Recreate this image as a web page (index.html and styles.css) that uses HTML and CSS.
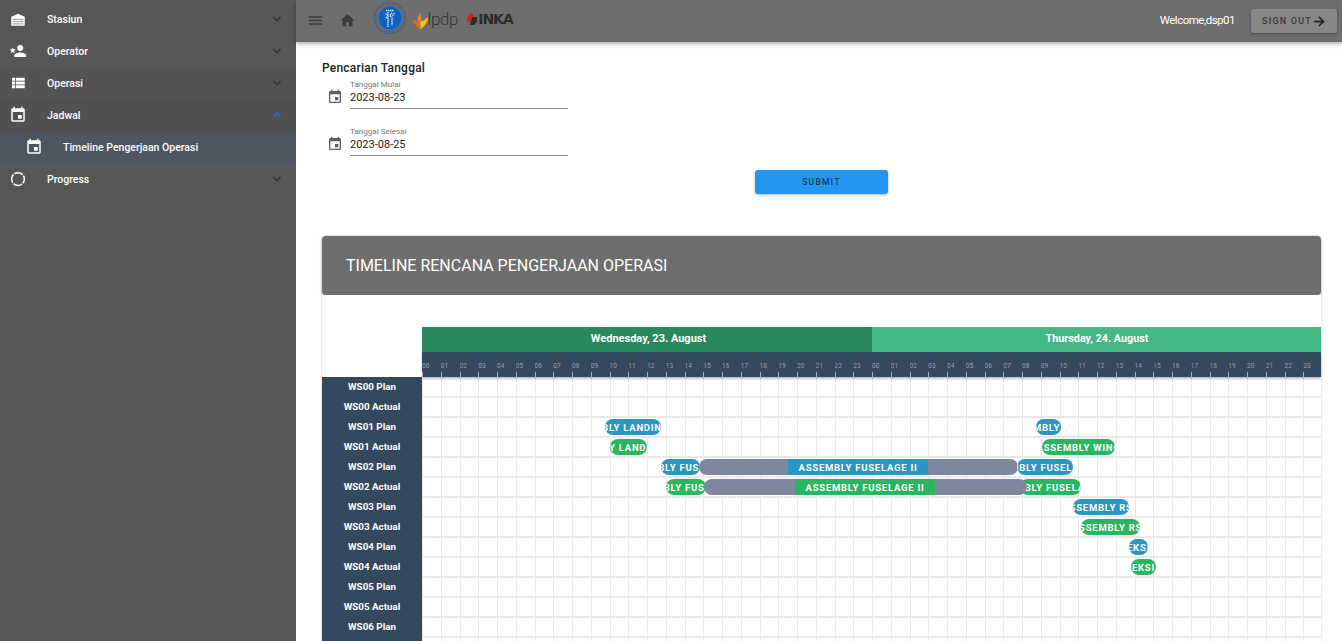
FILE: index.html
```html
<!DOCTYPE html>
<html lang="id">
<head>
<meta charset="utf-8">
<title>Timeline Pengerjaan Operasi</title>
<link rel="stylesheet" href="styles.css">
</head>
<body>
<div class="app">
  <aside class="sidebar">
    <div class="nav-row">
      <svg class="nav-icon" viewBox="0 0 24 24"><path d="M12 5 3 9v12h18V9z"/><path class="cut" d="M5 12.500h14M5 15.500h14M5 18.500h14"/></svg>
      <span class="nav-label">Stasiun</span>
      <svg class="chev" viewBox="0 0 24 24"><path d="M7.410 8.580 12 13.170l4.590-4.590L18 10l-6 6-6-6z"/></svg>
    </div>
    <div class="nav-row">
      <svg class="nav-icon" viewBox="0 0 24 24"><path d="M15 14c-2.670 0-8 1.330-8 4v2h16v-2c0-2.670-5.330-4-8-4m0-2a4 4 0 0 0 4-4 4 4 0 0 0-4-4 4 4 0 0 0-4 4 4 4 0 0 0 4 4M5 13.280l2.450 1.490-.65-2.810L9 10.080l-2.890-.25L5 7.190 3.870 9.830 1 10.080l2.180 1.880-.68 2.810z"/></svg>
      <span class="nav-label">Operator</span>
      <svg class="chev" viewBox="0 0 24 24"><path d="M7.410 8.580 12 13.170l4.590-4.590L18 10l-6 6-6-6z"/></svg>
    </div>
    <div class="nav-row nav-row-dim">
      <svg class="nav-icon" viewBox="0 0 24 24"><path d="M9 5v4h12V5M9 19h12v-4H9m0-1h12v-4H9M4 9h4V5H4m0 14h4v-4H4m0-1h4v-4H4z"/></svg>
      <span class="nav-label">Operasi</span>
      <svg class="chev" viewBox="0 0 24 24"><path d="M7.410 8.580 12 13.170l4.590-4.590L18 10l-6 6-6-6z"/></svg>
    </div>
    <div class="nav-row nav-row-open">
      <svg class="nav-icon" viewBox="0 0 24 24"><path d="M17 12h-5v5h5v-5zM16 1v2H8V1H6v2H5c-1.110 0-1.990.9-1.990 2L3 19c0 1.100.89 2 2 2h14c1.100 0 2-.9 2-2V5c0-1.100-.9-2-2-2h-1V1h-2zm3 18H5V8h14v11z"/></svg>
      <span class="nav-label">Jadwal</span>
      <svg class="chev chev-up" viewBox="0 0 24 24"><path d="M7.410 15.410 12 10.830l4.590 4.580L18 14l-6-6-6 6z"/></svg>
    </div>
    <div class="nav-row nav-sub">
      <svg class="nav-icon" viewBox="0 0 24 24"><path d="M17 12h-5v5h5v-5zM16 1v2H8V1H6v2H5c-1.110 0-1.990.9-1.990 2L3 19c0 1.100.89 2 2 2h14c1.100 0 2-.9 2-2V5c0-1.100-.9-2-2-2h-1V1h-2zm3 18H5V8h14v11z"/></svg>
      <span class="nav-label">Timeline Pengerjaan Operasi</span>
    </div>
    <div class="nav-row">
      <svg class="nav-icon" viewBox="0 0 24 24"><circle class="ring" cx="12" cy="12" r="8.500"/></svg>
      <span class="nav-label">Progress</span>
      <svg class="chev" viewBox="0 0 24 24"><path d="M7.410 8.580 12 13.170l4.590-4.590L18 10l-6 6-6-6z"/></svg>
    </div>
  </aside>

  <div class="main">
    <header class="topbar">
      <svg class="top-icon" viewBox="0 0 24 24"><path d="M3 18h18v-2H3v2zm0-5h18v-2H3v2zm0-7v2h18V6H3z"/></svg>
      <svg class="top-icon" viewBox="0 0 24 24"><path d="M10 20v-6h4v6h5v-8h3L12 3 2 12h3v8z"/></svg>
      <div class="logos">
        <svg class="logo-seal" viewBox="0 0 34 34"><circle class="seal-ring" cx="17" cy="17" r="15.500"/><circle class="seal-ring2" cx="17" cy="17" r="13.500"/><circle class="seal-core" cx="17" cy="17" r="11.500"/><path class="seal-mark" d="M13 9.500h8M15 11v15M19 11.500l-2 3 2 2v8M12.500 12.500l3 3M21.500 12l-2 3M13 16l2 2"/></svg>
        <svg class="logo-flame" viewBox="0 0 16 18"><path class="flame-a" d="M0 7l4 2 3.500 4v5C4 15.500 1 12 0 7z"/><path class="flame-b" d="M4.500 8c1-2.500 1.500-5 2.500-8 1 2.500 2.500 4 2 7l-2 4.500z"/><path class="flame-c" d="M16 5c0 5-3.500 9.500-8 13v-5c2-3.500 4.500-6 8-8zM7 12l3-4 1.500 1.500-3 4z"/></svg>
        <span class="logo-lpdp">lpdp</span>
        <svg class="logo-inka-mark" viewBox="0 0 12 14"><path class="mark-dark" d="M6 5h5v5l-3 3H4z"/><path d="M1 6.500C1 4 4 3 6 0.500c0 1.500.5 2 2 2.500L5 7l-1 4C2 10.500 1 8.500 1 6.500z"/></svg>
        <span class="logo-inka">INKA</span>
      </div>
      <span class="welcome">Welcome,dsp01</span>
      <button class="signout" type="button">SIGN OUT<svg viewBox="0 0 24 24"><path d="M4 11v2h12l-5.500 5.500 1.420 1.420L19.840 12l-7.920-7.920L10.500 5.500 16 11z"/></svg></button>
    </header>

    <main class="content">
      <section class="search">
        <h2 class="search-title">Pencarian Tanggal</h2>
        <div class="field">
          <svg class="field-icon" viewBox="0 0 24 24"><path d="M17 12h-5v5h5v-5zM16 1v2H8V1H6v2H5c-1.110 0-1.990.9-1.990 2L3 19c0 1.100.89 2 2 2h14c1.100 0 2-.9 2-2V5c0-1.100-.9-2-2-2h-1V1h-2zm3 18H5V8h14v11z"/></svg>
          <div class="field-box">
            <span class="field-label">Tanggal Mulai</span>
            <span class="field-value">2023-08-23</span>
          </div>
        </div>
        <div class="field">
          <svg class="field-icon" viewBox="0 0 24 24"><path d="M17 12h-5v5h5v-5zM16 1v2H8V1H6v2H5c-1.110 0-1.990.9-1.990 2L3 19c0 1.100.89 2 2 2h14c1.100 0 2-.9 2-2V5c0-1.100-.9-2-2-2h-1V1h-2zm3 18H5V8h14v11z"/></svg>
          <div class="field-box">
            <span class="field-label">Tanggal Selesai</span>
            <span class="field-value">2023-08-25</span>
          </div>
        </div>
        <div class="submit-wrap"><button class="submit" type="button">SUBMIT</button></div>
      </section>

      <section class="card">
        <div class="card-head">TIMELINE RENCANA PENGERJAAN OPERASI</div>
        <div class="gantt">
          <div class="gantt-corner"></div>
          <div class="gantt-top">
            <div class="days">
              <div class="day day-a">Wednesday, 23. August</div>
              <div class="day day-b">Thursday, 24. August</div>
            </div>
            <div class="hours">
              <span>00</span><span>01</span><span>02</span><span>03</span><span>04</span><span>05</span><span>06</span><span>07</span><span>08</span><span>09</span><span>10</span><span>11</span><span>12</span><span>13</span><span>14</span><span>15</span><span>16</span><span>17</span><span>18</span><span>19</span><span>20</span><span>21</span><span>22</span><span>23</span>
              <span>00</span><span>01</span><span>02</span><span>03</span><span>04</span><span>05</span><span>06</span><span>07</span><span>08</span><span>09</span><span>10</span><span>11</span><span>12</span><span>13</span><span>14</span><span>15</span><span>16</span><span>17</span><span>18</span><span>19</span><span>20</span><span>21</span><span>22</span><span>23</span>
            </div>
          </div>
          <div class="labels">
            <div>WS00 Plan</div><div>WS00 Actual</div><div>WS01 Plan</div><div>WS01 Actual</div><div>WS02 Plan</div><div>WS02 Actual</div><div>WS03 Plan</div><div>WS03 Actual</div><div>WS04 Plan</div><div>WS04 Actual</div><div>WS05 Plan</div><div>WS05 Actual</div><div>WS06 Plan</div>
          </div>
          <div class="plot">
            <div class="cols"><i></i><i></i><i></i><i></i><i></i><i></i><i></i><i></i><i></i><i></i><i></i><i></i><i></i><i></i><i></i><i></i><i></i><i></i><i></i><i></i><i></i><i></i><i></i><i></i><i></i><i></i><i></i><i></i><i></i><i></i><i></i><i></i><i></i><i></i><i></i><i></i><i></i><i></i><i></i><i></i><i></i><i></i><i></i><i></i><i></i><i></i><i></i><i></i></div>
            <div class="line"></div>
            <div class="line"></div>
            <div class="line">
              <div class="bar plan" style="left:183px;width:56px"><span>ASSEMBLY LANDING GEAR</span></div>
              <div class="bar plan" style="left:614px;width:25px"><span>ASSEMBLY WING</span></div>
            </div>
            <div class="line">
              <div class="bar actual" style="left:188px;width:37px"><span>ASSEMBLY LANDING GEAR</span></div>
              <div class="bar actual" style="left:620px;width:73px"><span>ASSEMBLY WING</span></div>
            </div>
            <div class="line">
              <div class="bar plan" style="left:239px;width:39px"><span>ASSEMBLY FUSELAGE I</span></div>
              <div class="bar rest" style="left:277px;width:319px"></div>
              <div class="bar plan bar-mid" style="left:366px;width:140px"><span>ASSEMBLY FUSELAGE II</span></div>
              <div class="bar plan" style="left:595px;width:56px"><span>ASSEMBLY FUSELAGE III</span></div>
            </div>
            <div class="line">
              <div class="bar actual" style="left:244px;width:40px"><span>ASSEMBLY FUSELAGE I</span></div>
              <div class="bar actual" style="left:598px;width:61px"><span>ASSEMBLY FUSELAGE III</span></div>
              <div class="bar rest" style="left:282px;width:323px"></div>
              <div class="bar actual bar-mid" style="left:373px;width:140px"><span>ASSEMBLY FUSELAGE II</span></div>
            </div>
            <div class="line">
              <div class="bar plan" style="left:651px;width:56px"><span>ASSEMBLY RSC</span></div>
            </div>
            <div class="line">
              <div class="bar actual" style="left:659px;width:59px"><span>ASSEMBLY RSC</span></div>
            </div>
            <div class="line">
              <div class="bar plan" style="left:707px;width:19px"><span>EKSI</span></div>
            </div>
            <div class="line">
              <div class="bar actual" style="left:709px;width:25px"><span>EKSI</span></div>
            </div>
            <div class="line"></div>
            <div class="line"></div>
            <div class="line"></div>
            <div class="line"></div>
          </div>
        </div>
      </section>
    </main>
  </div>
</div>
</body>
</html>
```

FILE: styles.css
```css
* { box-sizing: border-box; }
html, body { margin: 0; height: 100%; overflow: hidden; }
body { font-family: Roboto, "Liberation Sans", sans-serif; background: #fff; color: #222; }
.app { display: flex; height: 641px; overflow: hidden; }

.sidebar { flex: 0 0 296px; background: #565656; padding-top: 3px; }
.nav-row { display: flex; align-items: center; height: 32px; padding: 0 11px 0 9px; color: #fff; }
.nav-row-dim { background: #535353; }
.nav-row-open { background: #515151; }
.nav-sub { background: #4c5560; padding-left: 25px; }
.nav-icon { width: 18px; height: 18px; fill: #fff; flex: none; }
.nav-icon .cut { fill: none; stroke: #777; stroke-width: 1; }
.nav-icon .ring { fill: none; stroke: #fff; stroke-width: 2; stroke-dasharray: 12 1.350; stroke-dashoffset: 6; }
.nav-label { margin-left: 20px; font-size: 10.500px; font-weight: 500; flex: 1; }
.chev { width: 16px; height: 16px; fill: #333; flex: none; }
.chev-up { fill: #2468cc; }

.main { flex: 1; min-width: 0; display: flex; flex-direction: column; }
.topbar { flex: 0 0 42px; height: 42px; display: flex; align-items: center; background: #6e6e6e; padding: 0 5px 0 11px; gap: 15px; box-shadow: 0 2px 4px rgba(0,0,0,.3); position: relative; z-index: 2; }
.top-icon { width: 17px; height: 17px; fill: #3a3a3a; flex: none; margin-bottom: 2px; }
.logos { display: flex; align-items: flex-start; margin-left: 2px; flex: 1; height: 38px; padding-top: 1px; align-self: flex-start; }
.logo-seal { width: 34px; height: 34px; }
.seal-ring { fill: none; stroke: #1d5fa8; stroke-width: 1.200; stroke-dasharray: 1.500 1; }
.seal-ring2 { fill: none; stroke: #1d5fa8; stroke-width: .8; stroke-dasharray: 1 1; }
.seal-core { fill: #0a62c2; }
.seal-mark { fill: none; stroke: #e6ebf5; stroke-width: 1.300; stroke-dasharray: 1.400 .6; }
.logo-flame { width: 15px; height: 18px; margin: 11px 0 0 6px; }
.flame-a { fill: #d9701c; }
.flame-b { fill: #e8851e; }
.flame-c { fill: #f5bf1c; }
.logo-lpdp { font-family: Lato, sans-serif; font-weight: 300; font-size: 17px; color: #262626; line-height: 20px; letter-spacing: -.3px; margin: 8px 0 0 -.5px; }
.logo-inka-mark { width: 12px; height: 14px; fill: #e8141c; margin: 11px 0 0 8px; }
.mark-dark { fill: #2b2b2b; }
.logo-inka { font-family: "DejaVu Sans", sans-serif; font-weight: 700; font-size: 14px; color: #2b2b2b; letter-spacing: -1px; line-height: 16px; margin: 10px 0 0 0; }
.welcome { color: #fff; font-size: 11.500px; letter-spacing: -.5px; margin: 0 1px 3px 0; }
.signout { display: flex; align-items: center; justify-content: flex-start; gap: 0; width: 86px; height: 24px; border: 0; border-radius: 3px; padding: 0 0 0 11px; background: #878787; color: #3a3a3a; font: 500 9px Roboto, sans-serif; letter-spacing: 1.200px; box-shadow: 0 1px 3px rgba(0,0,0,.3); }
.signout svg { width: 15px; height: 15px; fill: #222; stroke: #222; stroke-width: .8; }

.content { flex: 1; min-height: 0; overflow: hidden; padding: 0 21px 0 26px; }
.search { height: 194px; padding-top: 18px; }
.search-title { margin: 0; font-size: 12px; font-weight: 500; line-height: 16px; color: #222; letter-spacing: .22px; }
.field { display: flex; align-items: flex-end; height: 33px; width: 246px; padding-left: 5px; margin-bottom: 14px; }
.field-icon { width: 16px; height: 16px; fill: #5e5e5e; flex: none; margin: 0 7px 4px 0; }
.field-box { flex: 1; display: flex; flex-direction: column; padding: 4px 0 0; }
.field-label { font-size: 8.100px; line-height: 9px; color: #777; margin-bottom: 1px; }
.field-value { font-size: 11px; line-height: 14px; color: #222; border-bottom: 1px solid #8d8d8d; height: 19px; padding-top: 1px; }
.submit-wrap { display: flex; justify-content: center; width: 999px; }
.submit { width: 133px; height: 24px; border: 0; border-radius: 3px; background: #2196f3; color: #1c1c1c; font: 400 8.500px Roboto, sans-serif; letter-spacing: 1.350px; padding: 0; box-shadow: 0 1px 3px rgba(0,0,0,.3); }

.card { width: 999px; box-shadow: 0 0 2px rgba(0,0,0,.25); border-radius: 4px; }
.card-head { height: 59px; line-height: 59px; padding-left: 24px; background: #6e6e6e; color: #fff; font-size: 16px; border-radius: 4px; box-shadow: 0 1px 3px rgba(0,0,0,.3); }
.gantt { display: grid; grid-template-columns: 100px 899px; grid-template-rows: 50px auto; padding-top: 32px; background: #fff; }
.gantt-corner { background: #fff; }
.days { display: flex; height: 25px; }
.day { flex: 0 0 450px; text-align: center; line-height: 24px; color: #fff; font-size: 11px; font-weight: 700; }
.day-a { background: #27895d; padding-left: 3px; }
.day-b { background: #43b883; flex-basis: 449px; font-size: 10.800px; padding-left: 1px; }
.hours { display: flex; height: 25px; background: #34485e; position: relative; z-index: 1; box-shadow: 0 2px 2px rgba(0,0,0,.25); overflow: hidden; }
.hours span { flex: 0 0 18.750px; font-size: 6.500px; color: #98a2ae; padding-top: 10px; position: relative; white-space: nowrap; overflow: hidden; }
.hours span::after { content: ""; position: absolute; left: 0; bottom: 0; width: 1px; height: 5px; background: #a7b0bb; }
.labels { background: #34485e; color: #fff; font-size: 9.800px; font-weight: 700; text-align: center; }
.labels div { height: 20px; line-height: 20px; white-space: nowrap; }
.plot { position: relative; overflow: hidden; padding-top: 1px; }
.cols { position: absolute; inset: 0; display: flex; }
.cols i { flex: 0 0 18.750px; border-left: 1px solid #e9e9e9; }
.line { position: relative; height: 20px; border-bottom: 2px solid #e9e9e9; }
.bar { position: absolute; top: 1px; height: 16px; border-radius: 8px; overflow: hidden; display: flex; justify-content: center; align-items: center; }
.bar span { flex: none; color: #fff; font-size: 9.500px; font-weight: 700; letter-spacing: .75px; white-space: nowrap; }
.plan { background: #2a96c1; }
.actual { background: #2bb560; }
.rest { background: #7e879e; }
.bar-mid { border-radius: 0; }
```
